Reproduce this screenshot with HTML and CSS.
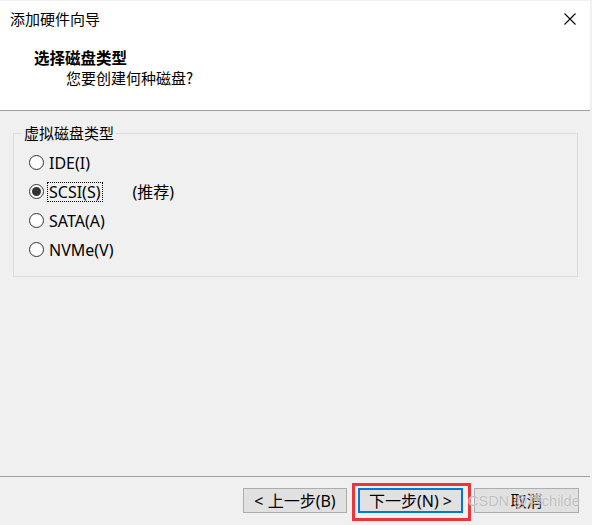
FILE: index.html
```html
<!DOCTYPE html>
<html lang="zh-CN">
<head>
<meta charset="utf-8">
<title>添加硬件向导</title>
<link rel="stylesheet" href="styles.css">
</head>
<body>
<div class="dialog">
  <header class="header">
    <div class="titlebar">
      <span class="title">添加硬件向导</span>
      <svg class="close" width="12" height="12" viewBox="0 0 12 12" aria-hidden="true">
        <path d="M0.5 0.5 L11.5 11.5 M11.5 0.5 L0.5 11.5" stroke="#000" stroke-width="1.1" fill="none"/>
      </svg>
    </div>
    <div class="heading">选择磁盘类型</div>
    <div class="subheading">您要创建何种磁盘?</div>
  </header>

  <main class="content">
    <fieldset class="group">
      <legend class="group-title">虚拟磁盘类型</legend>
      <div class="option">
        <span class="radio"></span>
        <span class="label">IDE(I)</span>
      </div>
      <div class="option">
        <span class="radio checked"></span>
        <span class="label focused">SCSI(S)</span>
        <span class="note">(推荐)</span>
      </div>
      <div class="option">
        <span class="radio"></span>
        <span class="label">SATA(A)</span>
      </div>
      <div class="option">
        <span class="radio"></span>
        <span class="label">NVMe(V)</span>
      </div>
    </fieldset>
  </main>

  <footer class="footer">
    <button class="btn btn-back">&lt; 上一步(B)</button>
    <button class="btn btn-next">下一步(N) &gt;</button>
    <button class="btn btn-cancel">取消</button>
    <span class="watermark">CSDN @博childe</span>
  </footer>
</div>
</body>
</html>
```

FILE: styles.css
```css
* { box-sizing: border-box; }

html, body {
  margin: 0;
  padding: 0;
  background: #f0f0f0;
}

body {
  font-family: "Noto Sans", "Noto Sans CJK SC", sans-serif;
  font-size: 15px;
  line-height: 20px;
  color: #000;
}

.dialog {
  width: 592px;
  height: 525px;
  display: flex;
  flex-direction: column;
  padding-right: 2px;
  position: relative;
}

.header {
  height: 111px;
  background: #fff;
  border-top: 1px solid #f0f0f0;
  border-bottom: 1px solid #a0a0a0;
}

.titlebar {
  height: 36px;
  display: flex;
  align-items: center;
  justify-content: space-between;
  padding-left: 10px;
  padding-right: 14px;
}

.title {
  font-family: "Noto Sans CJK SC", sans-serif;
  font-size: 15px;
}

.close { display: block; }

.heading {
  margin-top: 10px;
  padding-left: 34px;
  font-family: "Noto Sans CJK SC", sans-serif;
  font-weight: bold;
  font-size: 15.5px;
}

.subheading {
  margin-top: 1px;
  padding-left: 66px;
  font-family: "Noto Sans CJK SC", sans-serif;
}

.content {
  flex: 1;
  padding: 12px 12px 0 13px;
}

.group {
  margin: 0;
  padding: 5px 0 12px 8px;
  border: 1px solid #dcdcdc;
  min-inline-size: 0;
}

.group-title {
  padding: 0 2px;
  font-family: "Noto Sans CJK SC", sans-serif;
  line-height: 20px;
}

.option {
  height: 29px;
  display: flex;
  align-items: center;
  padding-left: 7px;
  font-size: 16px;
}

.radio {
  width: 15px;
  height: 15px;
  border: 1px solid #333;
  border-radius: 50%;
  background: #fff;
  display: flex;
  align-items: center;
  justify-content: center;
  margin-right: 3px;
}

.radio.checked::before {
  content: "";
  width: 9px;
  height: 9px;
  border-radius: 50%;
  background: #333;
}

.label {
  padding: 0 1px;
  border: 1px dotted transparent;
  line-height: 18px;
}

.label.focused {
  border-color: #000;
}

.note {
  margin-left: 30px;
}

.footer {
  height: 49px;
  border-top: 1px solid #a0a0a0;
  display: flex;
  justify-content: flex-end;
  align-items: flex-start;
  gap: 11px;
  padding-top: 11px;
  padding-right: 11px;
  position: relative;
}

.btn {
  width: 105px;
  height: 25px;
  margin: 0;
  padding: 0;
  background: #e1e1e1;
  border: 1px solid #adadad;
  font-family: "Noto Sans", "Noto Sans CJK SC", sans-serif;
  font-size: 16px;
  line-height: 20px;
  color: #000;
  position: relative;
}

.btn-back { width: 104px; }

.btn-next {
  border: 2px solid #0078d7;
}

.btn-next::after {
  content: "";
  position: absolute;
  left: -8px;
  right: -10px;
  top: -7px;
  bottom: -10px;
  border: 3px solid #e8363a;
}

.watermark {
  position: absolute;
  left: 468px;
  top: 14px;
  white-space: nowrap;
  font-family: "Liberation Sans", Arial, sans-serif;
  font-size: 14.5px;
  line-height: 20px;
  color: rgba(150, 150, 150, 0.6);
  text-shadow: 0 0 1px #fff;
  pointer-events: none;
}
```
